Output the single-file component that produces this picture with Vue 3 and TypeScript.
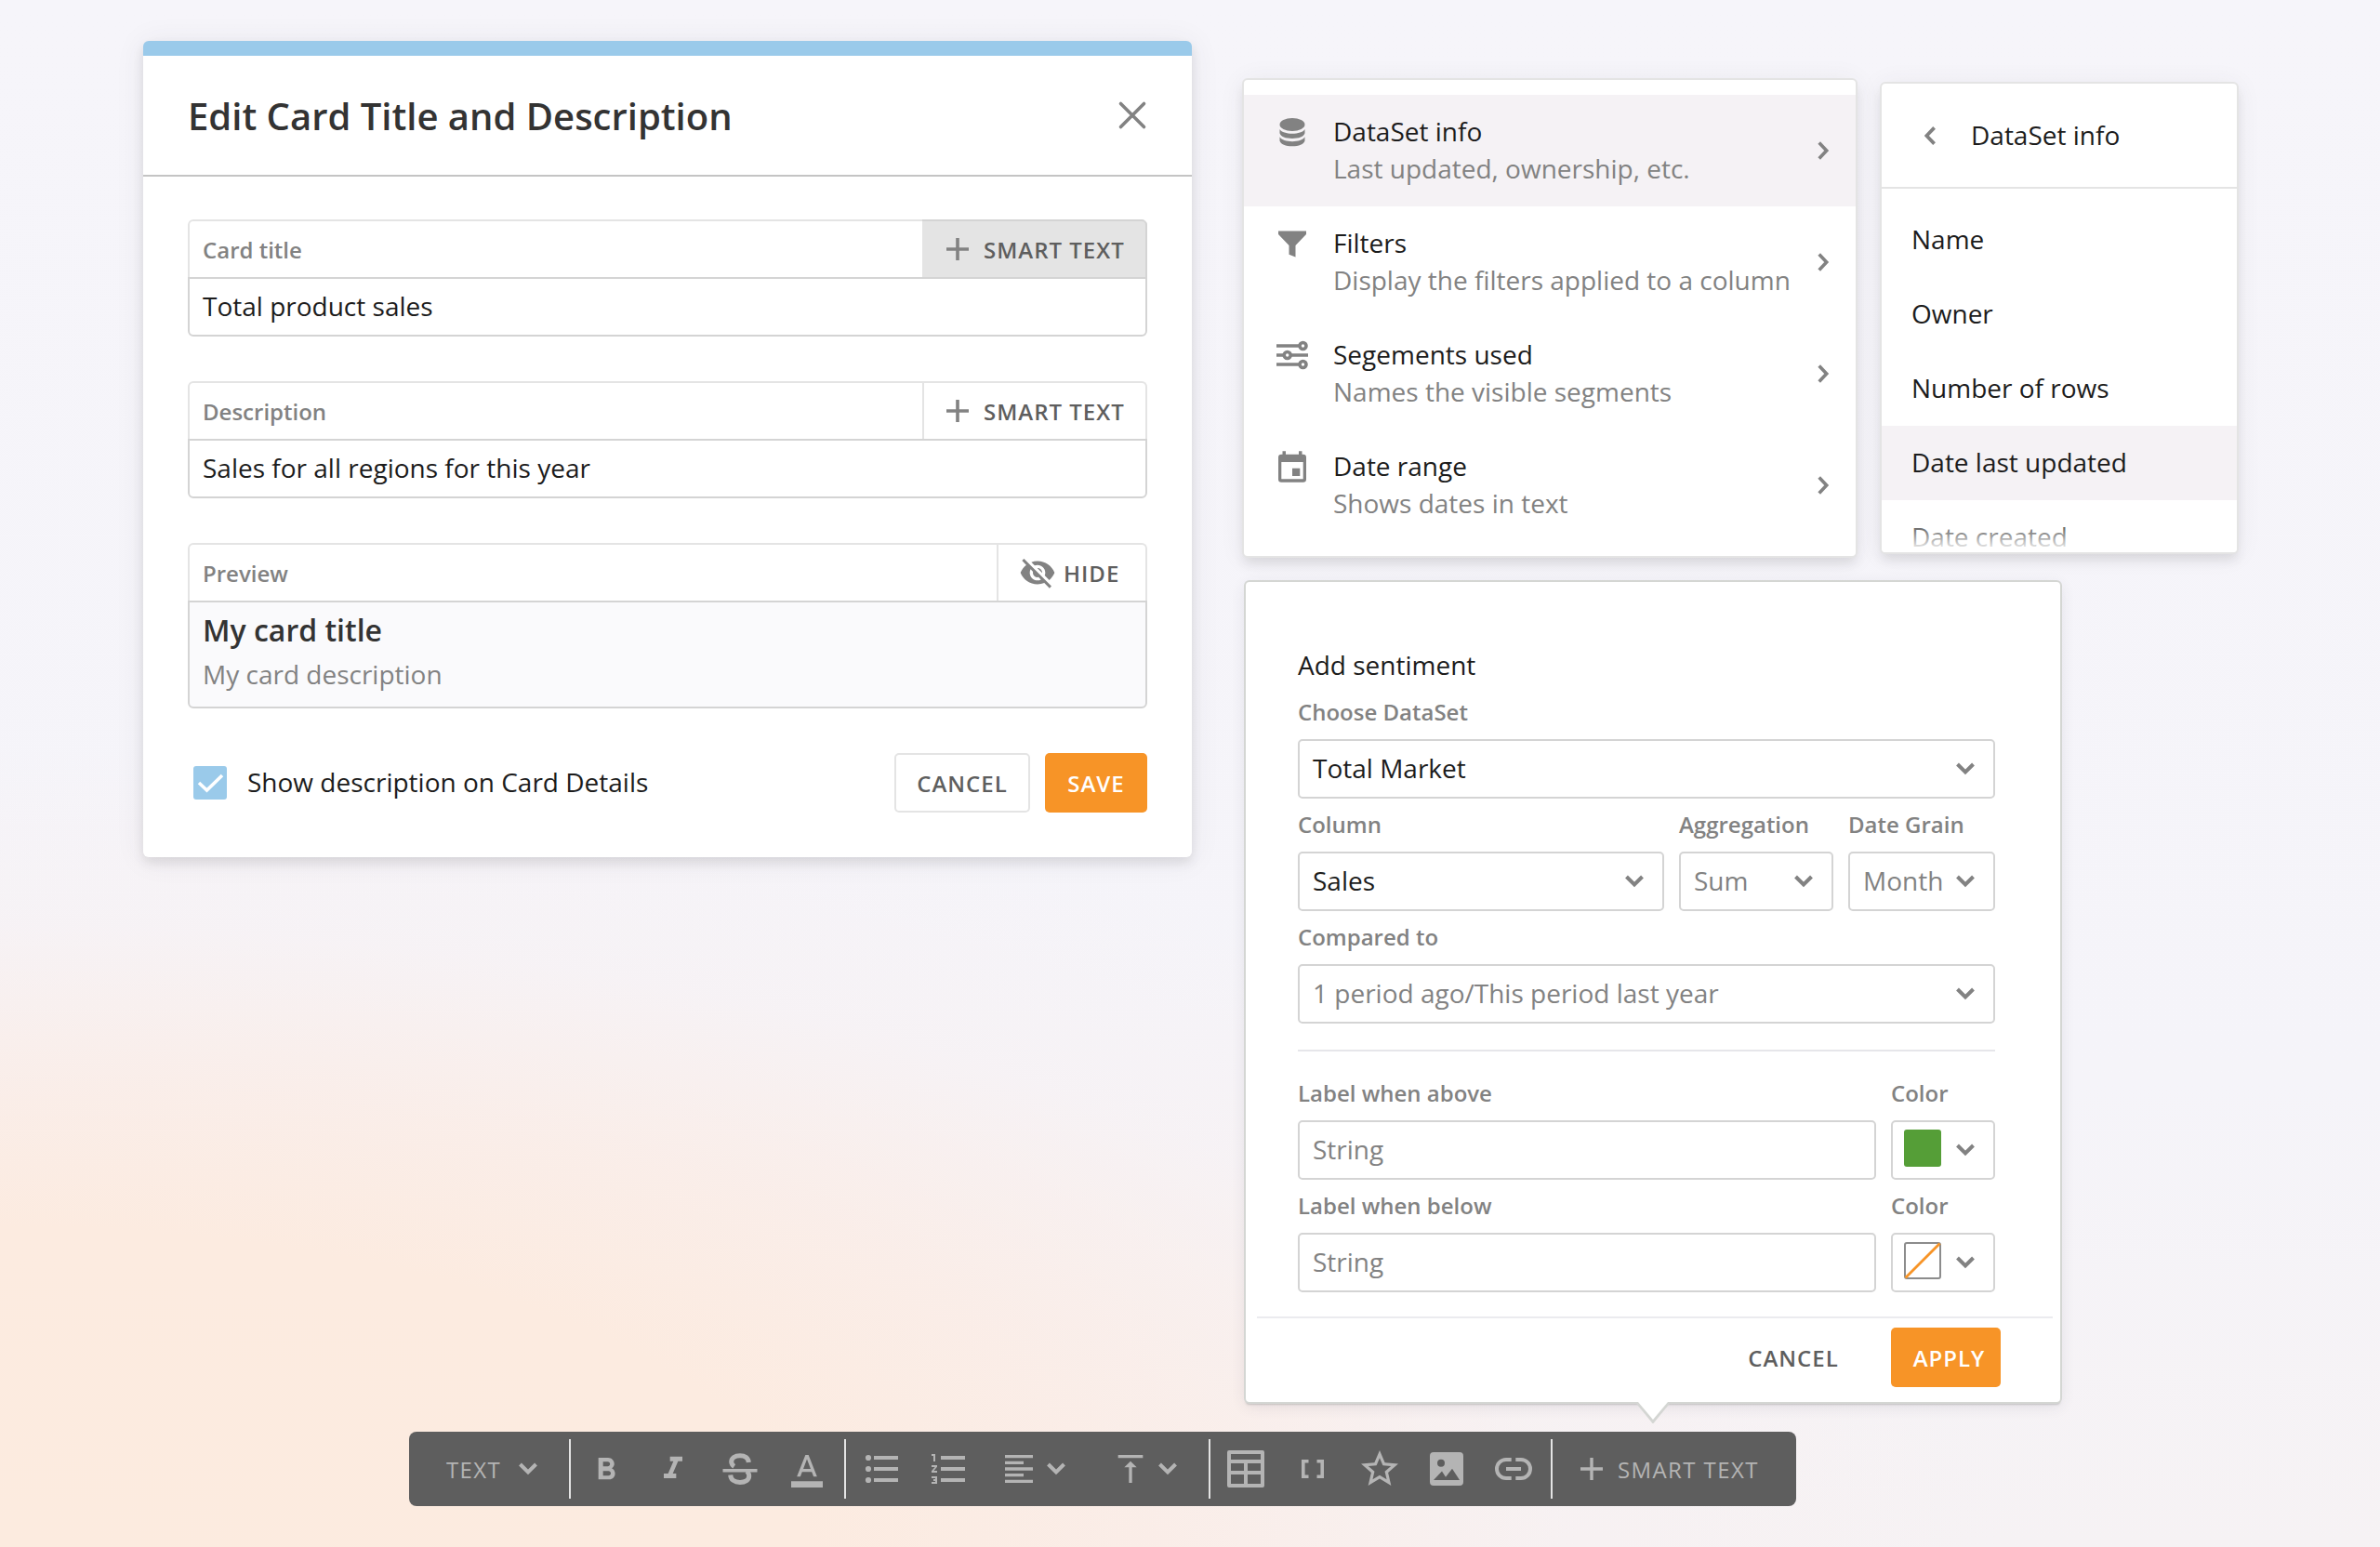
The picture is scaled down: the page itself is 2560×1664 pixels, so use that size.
<script setup lang="ts">
interface MenuEntry {
  icon: 'database' | 'filter' | 'sliders' | 'calendar'
  title: string
  hint: string
  active?: boolean
}

const menu: MenuEntry[] = [
  { icon: 'database', title: 'DataSet info', hint: 'Last updated, ownership, etc.', active: true },
  { icon: 'filter', title: 'Filters', hint: 'Display the filters applied to a column' },
  { icon: 'sliders', title: 'Segements used', hint: 'Names the visible segments' },
  { icon: 'calendar', title: 'Date range', hint: 'Shows dates in text' },
]

const infoItems: string[] = ['Name', 'Owner', 'Number of rows', 'Date last updated', 'Date created']
const activeInfo = 'Date last updated'

const fields = [
  { label: 'Card title', value: 'Total product sales', pressed: true },
  { label: 'Description', value: 'Sales for all regions for this year', pressed: false },
]

const thresholds = [
  { label: 'Label when above', filled: true },
  { label: 'Label when below', filled: false },
]
</script>

<template>
  <div class="page">
    <div class="stage">
      <section class="modal">
        <header class="modal-head">
          <h1>Edit Card Title and Description</h1>
          <svg class="close" width="32" height="32" viewBox="0 0 32 32">
            <path d="M3.5 3.5l25 25M28.5 3.5l-25 25" fill="none" stroke="#828282" stroke-width="3.6" stroke-linecap="round" />
          </svg>
        </header>
        <div class="modal-body">
          <div v-for="f in fields" :key="f.label" class="field">
            <div class="field-top">
              <span class="field-label">{{ f.label }}</span>
              <button class="smart" :class="{ pressed: f.pressed }">
                <svg width="24" height="24" viewBox="0 0 24 24"><path d="M12 0v24M0 12h24" stroke="#828282" stroke-width="3.6" /></svg>
                <span>SMART TEXT</span>
              </button>
            </div>
            <div class="field-value">{{ f.value }}</div>
          </div>
          <div class="field">
            <div class="field-top">
              <span class="field-label">Preview</span>
              <button class="hide">
                <svg width="40" height="40" viewBox="0 0 24 24">
                  <path fill="#828282" d="M12 7c2.76 0 5 2.24 5 5 0 .65-.13 1.26-.36 1.83l2.92 2.92c1.51-1.26 2.7-2.89 3.43-4.75-1.73-4.39-6-7.5-11-7.5-1.4 0-2.74.25-3.98.7l2.16 2.16C10.74 7.13 11.35 7 12 7zM2 4.27l2.28 2.28.46.46C3.08 8.3 1.78 10.02 1 12c1.73 4.39 6 7.5 11 7.5 1.55 0 3.03-.3 4.38-.84l.42.42L19.73 22 21 20.73 3.27 3 2 4.27zM7.53 9.8l1.55 1.55c-.05.21-.08.43-.08.65 0 1.66 1.34 3 3 3 .22 0 .44-.03.65-.08l1.55 1.55c-.67.33-1.41.53-2.2.53-2.76 0-5-2.24-5-5 0-.79.2-1.53.53-2.2zm4.31-.78l3.15 3.15.02-.16c0-1.66-1.34-3-3-3l-.17.01z" />
                </svg>
                <span>HIDE</span>
              </button>
            </div>
            <div class="preview">
              <div class="preview-title">My card title</div>
              <div class="preview-text">My card description</div>
            </div>
          </div>
          <footer class="modal-foot">
            <span class="check">
              <svg width="36" height="36" viewBox="0 0 36 36"><path d="M6 18l8.5 8L31 10" fill="none" stroke="#fff" stroke-width="3.6" /></svg>
            </span>
            <span class="check-label">Show description on Card Details</span>
            <button class="btn outlined">CANCEL</button>
            <button class="btn save">SAVE</button>
          </footer>
        </div>
      </section>

      <div class="right">
        <div class="menus">
          <nav class="menu">
            <div v-for="m in menu" :key="m.title" class="menu-row" :class="{ active: m.active }">
              <svg class="menu-icon" width="40" height="40" viewBox="0 0 40 40">
                <g v-if="m.icon === 'database'" fill="#828282">
                  <ellipse cx="20" cy="12" rx="13.5" ry="7" />
                  <path d="M6.5 17c2 3.3 7.5 4.7 13.5 4.7s11.5-1.4 13.5-4.7v4.300c-1 3.700-6.500 5.700-13.500 5.700s-12.500-2-13.500-5.700z" />
                  <path d="M6.500 25.300c2 3.300 7.500 4.900 13.500 4.900s11.500-1.600 13.500-4.900v4.200c-1 3.800-6.500 5.800-13.500 5.800s-12.500-2-13.500-5.800z" />
                </g>
                <path v-else-if="m.icon === 'filter'" fill="#828282" d="M5 6.500h30v3.500l-11.500 12v12.500l-7-2.800v-9.700l-11.500-12z" />
                <g v-else-if="m.icon === 'sliders'" fill="none" stroke="#828282" stroke-width="3.600">
                  <path d="M3 10h24M3 20h7M19 20h18M3 30h24" />
                  <circle cx="31.500" cy="10" r="3.500" /><circle cx="14.700" cy="20" r="3.500" /><circle cx="31.500" cy="30" r="3.500" />
                </g>
                <g v-else fill="#828282">
                  <path fill-rule="evenodd" d="M9.500 3.300h3.500v3.400h14V3.300h3.500v3.400h1.200A3.300 3.300 0 0 1 35 10v23.300a3.300 3.300 0 0 1-3.300 3.400H8.300A3.300 3.300 0 0 1 5 33.300V10a3.300 3.300 0 0 1 3.300-3.300h1.200zM8.300 15v18.300h23.400V15z" />
                  <path d="M20 21.700h8.300V30H20z" />
                </g>
              </svg>
              <div class="menu-text">
                <div class="menu-title">{{ m.title }}</div>
                <div class="menu-hint">{{ m.hint }}</div>
              </div>
              <svg class="menu-chev" width="13" height="20" viewBox="0 0 13 20"><path d="M1.700 1.500l8 8.500-8 8.500" fill="none" stroke="#828282" stroke-width="3.600" /></svg>
            </div>
          </nav>

          <aside class="info">
            <header class="info-head">
              <svg width="12" height="20" viewBox="0 0 12 20"><path d="M10.600 1.400L2.300 10l8.300 8.600" fill="none" stroke="#828282" stroke-width="3.800" /></svg>
              <span>DataSet info</span>
            </header>
            <div class="info-list">
              <div v-for="i in infoItems" :key="i" class="info-item" :class="{ active: i === activeInfo }">{{ i }}</div>
            </div>
          </aside>
        </div>

        <section class="sentiment">
          <div class="sent-body">
            <div class="sent-title">Add sentiment</div>
            <div class="row">
              <div class="cell grow">
                <label>Choose DataSet</label>
                <div class="select"><span>Total Market</span><svg class="chev" viewBox="0 0 20 14"><path d="M1.500 2L10 10.500 18.500 2" /></svg></div>
              </div>
            </div>
            <div class="row">
              <div class="cell grow">
                <label>Column</label>
                <div class="select"><span>Sales</span><svg class="chev" viewBox="0 0 20 14"><path d="M1.500 2L10 10.500 18.500 2" /></svg></div>
              </div>
              <div class="cell agg">
                <label>Aggregation</label>
                <div class="select muted"><span>Sum</span><svg class="chev" viewBox="0 0 20 14"><path d="M1.500 2L10 10.500 18.500 2" /></svg></div>
              </div>
              <div class="cell grain">
                <label>Date Grain</label>
                <div class="select muted"><span>Month</span><svg class="chev" viewBox="0 0 20 14"><path d="M1.500 2L10 10.500 18.500 2" /></svg></div>
              </div>
            </div>
            <div class="row">
              <div class="cell grow">
                <label>Compared to</label>
                <div class="select muted"><span>1 period ago/This period last year</span><svg class="chev" viewBox="0 0 20 14"><path d="M1.500 2L10 10.500 18.500 2" /></svg></div>
              </div>
            </div>
            <div class="rule"></div>
            <div v-for="t in thresholds" :key="t.label" class="row">
              <div class="cell grow">
                <label>{{ t.label }}</label>
                <div class="select muted"><span>String</span></div>
              </div>
              <div class="cell color">
                <label>Color</label>
                <div class="select swatch-box">
                  <svg class="swatch" width="40" height="40" viewBox="0 0 40 40">
                    <rect v-if="t.filled" width="40" height="40" rx="3" fill="#559e37" />
                    <template v-else>
                      <rect x="1" y="1" width="38" height="38" rx="2" fill="#fff" stroke="#8c8c8c" stroke-width="2" />
                      <path d="M1.500 38.500l37-37" stroke="#f79427" stroke-width="2.800" />
                    </template>
                  </svg>
                  <svg class="chev" viewBox="0 0 20 14"><path d="M1.500 2L10 10.500 18.500 2" /></svg>
                </div>
              </div>
            </div>
          </div>
          <footer class="sent-foot">
            <button class="btn flat">CANCEL</button>
            <button class="btn apply">APPLY</button>
          </footer>
          <svg class="pointer" width="40" height="26" viewBox="0 0 40 26">
            <path d="M2 0L20 22 38 0" fill="#d4d6d3" stroke="#d4d6d3" stroke-width="2" stroke-linejoin="round" />
            <path d="M4 0h32L20 19z" fill="#fff" />
          </svg>
        </section>
      </div>
    </div>

    <div class="toolbar">
      <div class="group text-group">
        <span class="tb-text">TEXT</span>
        <svg class="chev light" viewBox="0 0 20 14"><path d="M1.500 2L10 10.500 18.500 2" /></svg>
      </div>
      <i class="sep"></i>
      <div class="group marks">
        <svg width="40" height="40" viewBox="0 0 24 24"><path fill="#b4b4b4" transform="translate(0 .8)" d="M15.600 10.790c.97-.67 1.650-1.770 1.650-2.790 0-2.260-1.750-4-4-4H7v14h7.040c2.090 0 3.710-1.700 3.710-3.790 0-1.520-.86-2.820-2.150-3.420zM10 6.500h3c.83 0 1.500.67 1.500 1.500s-.67 1.500-1.500 1.500h-3v-3zm3.500 9H10v-3h3.500c.83 0 1.500.67 1.500 1.500s-.67 1.500-1.500 1.500z" /></svg>
        <svg width="40" height="40" viewBox="0 0 24 24"><path fill="#b4b4b4" d="M10 4v3h2.210l-3.420 8H6v3h8v-3h-2.210l3.420-8H18V4z" /></svg>
        <svg width="40" height="40" viewBox="0 0 40 40">
          <g fill="none" stroke="#b4b4b4" stroke-width="5">
            <path d="M29.300 13c-.3-4.700-4-7.300-9.300-7.300-5.500 0-9.300 2.600-9.300 6.600 0 2 1 3.700 3 5" />
            <path d="M9.700 26.500c.3 5 4.300 7.900 10.300 7.900 5.700 0 9.700-2.500 9.700-6.900 0-2.300-1-3.900-2.700-5" />
          </g>
          <path d="M1.500 20h37v3.400h-37z" fill="#b4b4b4" />
        </svg>
        <svg width="40" height="40" viewBox="0 0 24 24"><path fill="#b4b4b4" d="M11 3L5.500 17h2.250l1.120-3h6.250l1.120 3h2.250L13 3h-2zm-1.380 9L12 5.670 14.380 12H9.620zM1.800 20h20.400v4H1.800z" /></svg>
      </div>
      <i class="sep"></i>
      <div class="group lists">
        <svg width="48" height="48" viewBox="0 0 24 24"><g fill="#b4b4b4"><circle cx="4" cy="6" r="1.550" /><circle cx="4" cy="12" r="1.550" /><circle cx="4" cy="18" r="1.550" /><path d="M7 5h13v2H7zM7 11h13v2H7zM7 17h13v2H7z" /></g></svg>
        <svg class="numbered" width="48" height="48" viewBox="0 0 24 24"><path fill="#b4b4b4" d="M2 17h2v.5H3v1h1v.5H2v1h3v-4H2v1zm1-9h1V4H2v1h1v3zm-1 3h1.800L2 13.100v.9h3v-1H3.200L5 10.900V10H2v1zm5-6v2h13V5H7zm0 14h13v-2H7v2zm0-6h13v-2H7v2z" /></svg>
        <svg class="align" width="40" height="40" viewBox="0 0 24 24"><path fill="#b4b4b4" d="M15 15H3v2h12v-2zm0-8H3v2h12V7zM3 13h18v-2H3v2zm0 8h18v-2H3v2zM3 3v2h18V3H3z" /></svg>
        <svg class="chev light tight" viewBox="0 0 20 14"><path d="M1.500 2L10 10.500 18.500 2" /></svg>
        <svg class="valign" width="40" height="40" viewBox="0 0 24 24"><path fill="#b4b4b4" d="M8 11h3v10h2V11h3l-4-4-4 4zM4 3v2h16V3H4z" /></svg>
        <svg class="chev light" viewBox="0 0 20 14"><path d="M1.500 2L10 10.500 18.500 2" /></svg>
      </div>
      <i class="sep"></i>
      <div class="group inserts">
        <svg width="40" height="40" viewBox="0 0 40 40"><path fill="#b4b4b4" fill-rule="evenodd" d="M2 0h36a2 2 0 0 1 2 2v36a2 2 0 0 1-2 2H2a2 2 0 0 1-2-2V2a2 2 0 0 1 2-2zM4 4v6h32V4zM4 14v8h14v-8zM22 14v8h14v-8zM4 26v10h14V26zM22 26v10h14V26z" /></svg>
        <svg width="40" height="40" viewBox="0 0 40 40"><path d="M15.500 11.800h-5.700v16.400h5.700M24.500 11.800h5.700v16.400h-5.700" fill="none" stroke="#b4b4b4" stroke-width="3.600" /></svg>
        <svg width="40" height="40" viewBox="2 2 20 20"><path fill="#b4b4b4" d="M22 9.240l-7.190-.62L12 2 9.190 8.630 2 9.240l5.460 4.730L5.820 21 12 17.270 18.180 21l-1.630-7.030L22 9.240zM12 15.400l-3.760 2.270 1-4.280-3.320-2.880 4.380-.38L12 6.100l1.710 4.040 4.380.38-3.320 2.880 1 4.280L12 15.400z" /></svg>
        <svg width="40" height="40" viewBox="0 0 40 40"><path fill="#b4b4b4" fill-rule="evenodd" d="M6 2h28a4 4 0 0 1 4 4v28a4 4 0 0 1-4 4H6a4 4 0 0 1-4-4V6a4 4 0 0 1 4-4zM14 9.700a4 4 0 1 0 0 8 4 4 0 1 0 0-8zM6 32h28l-8-12.200-7 9-4-6.300z" /></svg>
        <svg width="40" height="40" viewBox="0 0 40 40"><path d="M17.700 10H12a10 10 0 0 0 0 20h5.700M22.300 10H28a10 10 0 0 1 0 20h-5.700M12 20h16" fill="none" stroke="#b4b4b4" stroke-width="4" /></svg>
      </div>
      <i class="sep"></i>
      <div class="group smart-group">
        <svg width="24" height="24" viewBox="0 0 24 24"><path d="M12 0v24M0 12h24" stroke="#b4b4b4" stroke-width="3.400" /></svg>
        <span class="tb-text">SMART TEXT</span>
      </div>
    </div>
  </div>
</template>

<style>
html,
body {
  margin: 0;
  overflow: hidden;
}
</style>

<style scoped>
* {
  box-sizing: border-box;
}
svg {
  display: block;
  flex: none;
}
button {
  font: inherit;
  margin: 0;
  padding: 0;
  border: 0;
  background: none;
}
.page {
  width: 2560px;
  height: 1664px;
  padding: 44px 0 0 154px;
  font-family: 'Open Sans', sans-serif;
  font-size: 28px;
  color: #1c1c1c;
  overflow: hidden;
  background:
    radial-gradient(ellipse 2150px 860px at 0% 100%, #fcebdf 0%, #fcebe0 40%, rgba(251, 236, 229, 0.8) 58%, rgba(249, 239, 238, 0.35) 78%, rgba(248, 241, 243, 0) 100%),
    linear-gradient(180deg, #f6f5fa 0%, #f5f4f9 70%, #f6f2f4 100%);
}
.stage {
  display: flex;
  align-items: flex-start;
  height: 1496px;
}

/* Edit dialog */
.modal {
  width: 1128px;
  height: 878px;
  background: #fff;
  border-top: 16px solid #9acaea;
  border-radius: 6px;
  box-shadow: 0 6px 12px rgba(60, 60, 60, 0.12), 0 2px 32px rgba(60, 60, 80, 0.08);
}
.modal-head {
  height: 130px;
  padding: 0 48px;
  border-bottom: 2px solid #c4c4c4;
  display: flex;
  align-items: center;
  justify-content: space-between;
}
h1 {
  margin: 0;
  padding-top: 2px;
  font-size: 40px;
  line-height: 54px;
  font-weight: 600;
  color: #333;
}
.modal-body {
  padding: 46px 48px 48px;
}
.field {
  margin-bottom: 48px;
}
.field-top {
  display: flex;
  height: 62px;
  border: 2px solid #e4e4e4;
  border-bottom: 0;
  border-radius: 6px 6px 0 0;
}
.field-label {
  flex: 1;
  padding-left: 14px;
  font-size: 24px;
  line-height: 61px;
  font-weight: 600;
  color: #828282;
}
.smart,
.hide {
  display: flex;
  align-items: center;
  border-left: 2px solid #e4e4e4;
  font-size: 24px;
  font-weight: 600;
  letter-spacing: 1px;
  color: #5e5e5e;
}
.smart {
  width: 240px;
  padding-left: 24px;
  gap: 16px;
}
.smart.pressed {
  background: #e4e4e4;
  box-shadow: 0 -2px 0 #d4d4d4, 2px 0 0 #d4d4d4;
  border-radius: 0 4px 0 0;
}
.hide {
  width: 160px;
  padding-left: 22px;
  gap: 8px;
}
.field-value,
.preview {
  border: 2px solid #d4d4d4;
  border-radius: 0 0 6px 6px;
}
.field-value {
  height: 64px;
  padding-left: 14px;
  line-height: 58px;
}
.preview {
  height: 116px;
  padding: 8px 14px 0;
  background: #fafafc;
}
.preview-title {
  font-size: 32px;
  line-height: 44px;
  font-weight: 600;
  color: #333;
}
.preview-text {
  margin-top: 4px;
  line-height: 42px;
  color: #828282;
}
.modal-foot {
  display: flex;
  align-items: center;
  height: 64px;
}
.check {
  width: 36px;
  height: 36px;
  margin-left: 6px;
  background: #9acaea;
  border-radius: 3px;
}
.check-label {
  flex: 1;
  padding-left: 22px;
  line-height: 40px;
  padding-bottom: 2px;
}
.btn {
  height: 64px;
  border-radius: 5px;
  font-size: 24px;
  line-height: 33px;
  padding-top: 1px;
  font-weight: 600;
  letter-spacing: 1px;
  text-align: center;
  color: #5e5e5e;
}
.outlined {
  width: 146px;
  border: 2px solid #e4e4e4;
}
.save {
  width: 110px;
  margin-left: 16px;
  background: #f79427;
  color: #fff;
}

/* Popup menus */
.right {
  padding: 42px 0 0 56px;
}
.menus {
  display: flex;
  align-items: flex-start;
  gap: 28px;
}
.menu,
.info {
  background: #fff;
  border-radius: 4px;
  box-shadow: 0 0 0 2px #e4e4e4, 0 8px 12px rgba(60, 60, 60, 0.12), 0 2px 28px rgba(60, 60, 80, 0.08);
}
.menu {
  width: 658px;
  height: 512px;
  padding: 16px 0;
}
.menu-row {
  display: flex;
  height: 120px;
}
.menu-row.active,
.info-item.active {
  background: #f5f2f5;
}
.menu-icon {
  margin: 20px 0 0 32px;
}
.menu-text {
  flex: 1;
  padding: 19px 0 0 24px;
  line-height: 40px;
  white-space: nowrap;
}
.menu-hint {
  color: #828282;
}
.menu-chev {
  margin: 50px 28px 0 0;
}
.info {
  position: relative;
  width: 382px;
  height: 504px;
  margin-top: 4px;
}
.info::after {
  content: '';
  position: absolute;
  left: 0;
  right: 0;
  bottom: 0;
  height: 40px;
  border-radius: 0 0 4px 4px;
  background: linear-gradient(180deg, rgba(255, 255, 255, 0) 0%, rgba(255, 255, 255, 0.85) 84%, #fff 88%);
}
.info-head {
  display: flex;
  align-items: center;
  height: 113px;
  padding: 0 0 0 46px;
  border-bottom: 2px solid #e4e4e4;
  gap: 38px;
}
.info-head span {
  padding-bottom: 1px;
}
.info-list {
  padding-top: 15px;
}
.info-item {
  height: 80px;
  padding-left: 32px;
  line-height: 78px;
}

/* Sentiment form */
.sentiment {
  position: relative;
  width: 876px;
  height: 882px;
  margin: 28px 0 0 2px;
  background: #fff;
  border-radius: 4px;
  box-shadow: 0 0 0 2px #d4d6d3, 0 3px 2px rgba(120, 120, 120, 0.35), 0 4px 16px rgba(60, 60, 80, 0.12);
}
.sent-body {
  height: 790px;
  padding: 69px 70px 0 56px;
}
.sent-title {
  line-height: 40px;
  margin-bottom: 14px;
}
.row {
  display: flex;
  gap: 16px;
  margin-bottom: 11px;
}
.grow {
  flex: 1;
}
.agg {
  width: 166px;
}
.grain {
  width: 158px;
}
.color {
  width: 112px;
}
label {
  display: block;
  margin-bottom: 13px;
  font-size: 24px;
  line-height: 33px;
  font-weight: 600;
  color: #828282;
}
.select {
  display: flex;
  align-items: center;
  justify-content: space-between;
  height: 64px;
  padding: 0 20px 0 14px;
  border: 2px solid #d4d4d4;
  border-radius: 5px;
  white-space: nowrap;
}
.select span {
  padding-bottom: 2px;
}
.muted {
  color: #828282;
}
.chev {
  width: 20px;
  height: 14px;
  fill: none;
  stroke: #828282;
  stroke-width: 4;
}
.light {
  stroke: #b4b4b4;
}
.swatch-box {
  padding-left: 12px;
}
.swatch {
  margin-top: -4px;
}
.rule {
  height: 2px;
  margin: 28px 0;
  background: #e6e6ea;
}
.sent-foot {
  display: flex;
  justify-content: flex-end;
  margin: 0 8px 0 12px;
  padding: 10px 56px 0 0;
  border-top: 2px solid #ebebef;
}
.flat {
  width: 146px;
  margin-right: 32px;
}
.apply {
  width: 118px;
  padding-left: 7px;
  background: #f79427;
  color: #fff;
}
.pointer {
  position: absolute;
  left: 418px;
  top: 882px;
}

/* Formatting toolbar */
.toolbar {
  display: flex;
  align-items: center;
  width: 1492px;
  height: 80px;
  margin-left: 286px;
  background: #5e5e5e;
  border-radius: 8px;
}
.group {
  display: flex;
  align-items: center;
}
.sep {
  width: 2px;
  height: 64px;
  background: #e4e4e4;
}
.tb-text {
  font-size: 24px;
  line-height: 33px;
  font-weight: 500;
  letter-spacing: 1.4px;
  color: #b4b4b4;
}
.text-group {
  width: 172px;
  padding: 0 34px 0 40px;
  justify-content: space-between;
}
.marks {
  width: 294px;
  padding-left: 18px;
  gap: 32px;
}
.lists {
  width: 390px;
  padding-left: 16px;
}
.numbered {
  margin-left: 24px;
}
.align {
  margin-left: 30px;
}
.tight {
  margin-left: 10px;
}
.valign {
  margin: 0 10px 0 50px;
}
.inserts {
  width: 366px;
  padding-left: 18px;
  gap: 32px;
}
.smart-group {
  padding-left: 30px;
  gap: 16px;
}
</style>
